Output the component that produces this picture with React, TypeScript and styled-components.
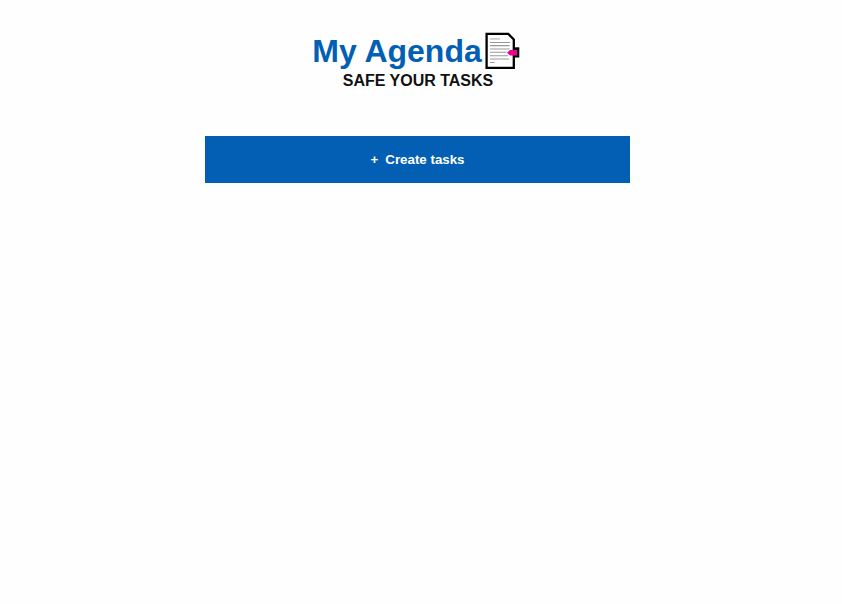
import React from "react";
import styled, { createGlobalStyle } from "styled-components";

const GlobalStyle = createGlobalStyle`
  body { margin: 0; background: #fefefe; font-family: "Liberation Sans", Arial, sans-serif; }
`;
const Page = styled.main`
  width: 425px;
  margin-left: 205px;
  padding-top: 30px;
`;
const Header = styled.header`
  display: flex;
  flex-direction: column;
  align-items: center;
  height: 106px;
`;
const Title = styled.h1`
  display: flex;
  align-items: center;
  margin: 0;
  height: 42px;
  padding-right: 3px;
  gap: 2px;
  color: #025fb3;
  font-size: 32px;
  line-height: 42px;
`;
const Subtitle = styled.h2`
  margin: 0;
  padding-left: 1px;
  color: #111;
  font-size: 16px;
  line-height: 17px;
`;
const CreateButton = styled.button`
  display: flex;
  align-items: center;
  justify-content: center;
  gap: 7px;
  width: 100%;
  height: 47px;
  padding: 0;
  border: 0;
  background: #025fb3;
  color: #fff;
  font: bold 13.33px "Liberation Sans", Arial, sans-serif;
`;

/* Sheet of paper with a folded corner and a pink index tab */
const NoteIcon = () => (
  <svg width="36" height="38" viewBox="0 0 36 38" fill="none">
    <path d="M2.6 1.9H24.3L29.8 7.5V35.8H2.6Z" fill="#fff" stroke="#000" strokeWidth="2.3" />
    <path d="M29 15.3H35.3V25.5H29Z" fill="#000" />
    <path d="M23 20.7L26 18H33V23.5H26Z" fill="#ec008c" />
    <path d="M6 6.9H16" stroke="#bbb" strokeWidth="1.3" />
    <path d="M6 10.5H26M6 13.6H25.5M6 17H25.5M6 20.3H22.5M6 23.7H24M6 27H25M6 30.5H10.5" stroke="#999" strokeWidth="1.1" />
  </svg>
);

export default function App() {
  return (
    <Page>
      <GlobalStyle />
      <Header>
        <Title>My Agenda<NoteIcon /></Title>
        <Subtitle>SAFE YOUR TASKS</Subtitle>
      </Header>
      <CreateButton><span>+</span>Create tasks</CreateButton>
    </Page>
  );
}
